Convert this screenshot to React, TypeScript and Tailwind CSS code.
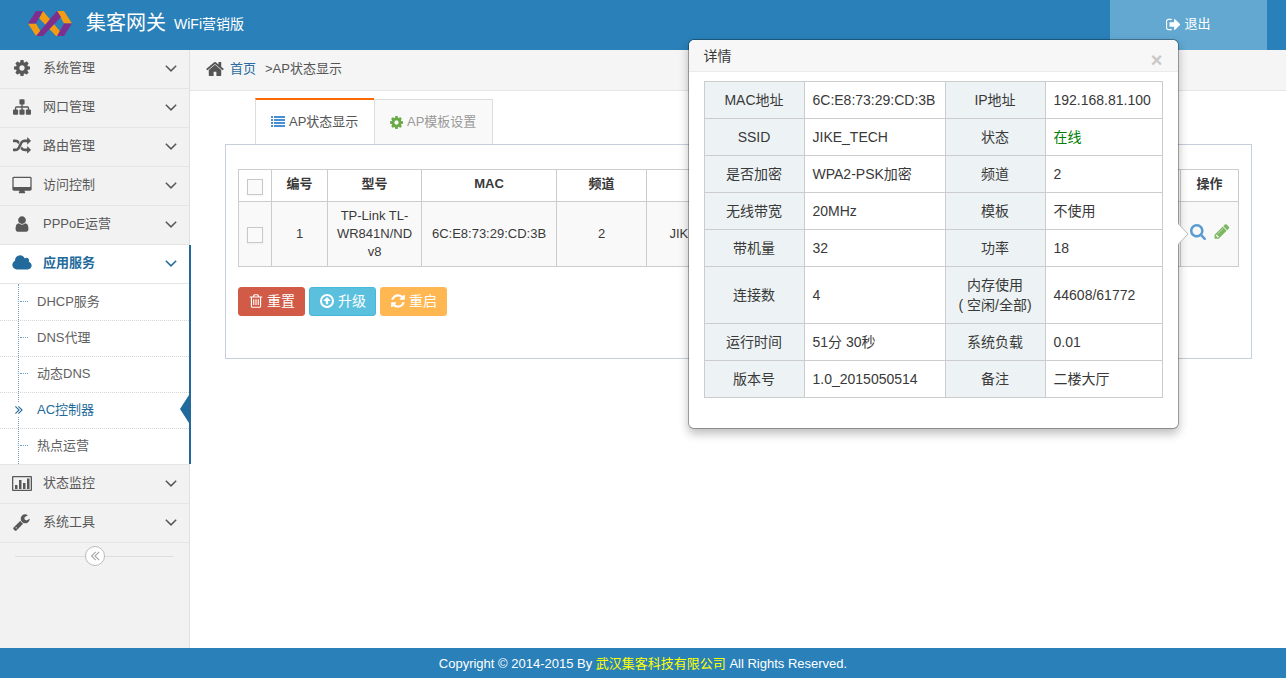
import { useState } from 'react';
import type { ReactNode } from 'react';
import clsx from 'clsx';

const icons = {
  cog: {
    box: '128 128 1536 1536',
    d: 'M1152 896q0-106-75-181t-181-75-181 75-75 181 75 181 181 75 181-75 75-181zm512-109v222q0 12-8 23t-20 13l-185 28q-19 54-39 91 35 50 107 138 10 12 10 25t-9 23q-27 37-99 108t-94 71q-12 0-26-9l-138-108q-44 23-91 38-16 136-29 186-7 28-36 28h-222q-14 0-24.5-8.5t-11.5-21.5l-28-184q-49-16-90-37l-141 107q-10 9-25 9-14 0-25-11-126-114-165-168-7-10-7-23 0-12 8-23 15-21 51-66.5t54-70.5q-27-50-41-99l-183-27q-13-2-21-12.5t-8-23.5v-222q0-12 8-23t19-13l186-28q14-46 39-92-40-57-107-138-10-12-10-24 0-10 9-23 26-36 98.5-107.5t94.5-71.5q13 0 26 10l138 107q44-23 91-38 16-136 29-186 7-28 36-28h222q14 0 24.5 8.5t11.5 21.5l28 184q49 16 90 37l142-107q9-9 24-9 13 0 25 10 129 119 165 170 7 8 7 22 0 12-8 23-15 21-51 66.5t-54 70.5q26 50 41 98l183 28q13 2 21 12.5t8 23.5z',
  },
  sitemap: {
    box: '0 0 1792 1792',
    d: 'M1792 1248v320q0 40-28 68t-68 28h-320q-40 0-68-28t-28-68v-320q0-40 28-68t68-28h96v-192h-512v192h96q40 0 68 28t28 68v320q0 40-28 68t-68 28h-320q-40 0-68-28t-28-68v-320q0-40 28-68t68-28h96v-192h-512v192h96q40 0 68 28t28 68v320q0 40-28 68t-68 28h-320q-40 0-68-28t-28-68v-320q0-40 28-68t68-28h96v-192q0-52 38-90t90-38h512v-192h-96q-40 0-68-28t-28-68v-320q0-40 28-68t68-28h320q40 0 68 28t28 68v320q0 40-28 68t-68 28h-96v192h512q52 0 90 38t38 90v192h96q40 0 68 28t28 68z',
  },
  random: {
    box: '0 0 1792 1792',
    d: 'M666 481q-60 92-137 273-22-45-37-72.5t-40.5-63.5-51-56.5-63-35-81.5-14.5h-224q-14 0-23-9t-9-23v-192q0-14 9-23t23-9h224q250 0 410 225zm1126 799q0 14-9 23l-320 320q-9 9-23 9-13 0-22.5-9.5t-9.5-22.5v-192q-32 0-85 .5t-81 1-73-1-71-5-64-10.5-63-18.5-58-28.5-59-40-55-53.5-56-69.5q59-93 136-273 22 45 37 72.5t40.5 63.5 51 56.5 63 35 81.5 14.5h256v-192q0-14 9-23t23-9q12 0 24 10l319 319q9 9 9 23zm0-896q0 14-9 23l-320 320q-9 9-23 9-13 0-22.5-9.5t-9.5-22.5v-192h-256q-48 0-87 15t-69 45-51 61.5-45 77.5q-32 62-78 171-29 66-49.5 111t-54 105-64 100-74 83-90 68.5-106.5 42-128 16.5h-224q-14 0-23-9t-9-23v-192q0-14 9-23t23-9h224q48 0 87-15t69-45 51-61.5 45-77.5q32-62 78-171 29-66 49.5-111t54-105 64-100 74-83 90-68.5 106.5-42 128-16.5h256v-192q0-14 9-23t23-9q12 0 24 10l319 319q9 9 9 23z',
  },
  desktop: {
    box: '-64 -64 1920 1792',
    d: 'M1728 992v-832q0-13-9.5-22.5t-22.5-9.5h-1600q-13 0-22.5 9.5t-9.5 22.5v832q0 13 9.5 22.5t22.5 9.5h1600q13 0 22.5-9.5t9.5-22.5zm128-832v1088q0 66-47 113t-113 47h-544q0 37 16 77.5t32 71 16 43.5q0 26-19 45t-45 19h-512q-26 0-45-19t-19-45q0-14 16-44t32-70 16-78h-544q-66 0-113-47t-47-113v-1088q0-66 47-113t113-47h1600q66 0 113 47t47 113z',
  },
  user: {
    box: '0 0 1792 1792',
    d: 'M1536 1399q0 109-62.5 187t-150.5 78h-854q-88 0-150.5-78t-62.5-187q0-85 8.5-160.5t31.5-152 58.5-131 94-89 134.5-34.5q131 128 313 128t313-128q76 0 134.5 34.5t94 89 58.5 131 31.5 152 8.5 160.5zm-256-887q0 159-112.5 271.5t-271.5 112.5-271.5-112.5-112.5-271.5 112.5-271.5 271.5-112.5 271.5 112.5 112.5 271.5z',
  },
  cloud: {
    box: '64 0 1920 1792',
    d: 'M1984 1152q0 159-112.5 271.5t-271.5 112.5h-1088q-185 0-316.5-131.5t-131.5-316.5q0-132 71-241.5t187-163.5q-2-28-2-43 0-212 150-362t362-150q158 0 286.5 88t187.5 230q70-62 166-62 106 0 181 75t75 181q0 75-41 138 129 30 213 134.5t84 239.5z',
  },
  chart: {
    box: '0 0 20 18',
    d: 'M1 2h18a1 1 0 0 1 1 1v13a1 1 0 0 1-1 1H1a1 1 0 0 1-1-1V3a1 1 0 0 1 1-1zm.3 1.3v12.4h17.4V3.300zM3 11h2.500v4H3zM7 6h2.500v9H7zM11 9h2.500v6H11zM15 4.500h2.500V15H15z',
  },
  wrench: {
    box: '64 0 1792 1792',
    d: 'M448 1472q0-26-19-45t-45-19-45 19-19 45 19 45 45 19 45-19 19-45zm644-420l-682 682q-37 37-90 37-52 0-91-37l-106-108q-38-36-38-90 0-53 38-91l681-681q39 98 114.5 173.5t173.5 114.5zm634-435q0 39-23 106-47 134-164.5 217.5t-258.5 83.5q-185 0-316.5-131.5t-131.5-316.5 131.5-316.5 316.5-131.5q58 0 121.5 16.5t107.5 46.5q16 11 16 28t-16 28l-293 169v224l193 107q5-3 79-48.5t135.5-81 70.5-35.5q15 0 23.500 10t8.500 25z',
  },
  angleDown: {
    box: '0 0 1792 1792',
    d: 'M1395 736q0 13-10 23l-466 466q-10 10-23 10t-23-10l-466-466q-10-10-10-23t10-23l50-50q10-10 23-10t23 10l393 393 393-393q10-10 23-10t23 10l50 50q10 10 10 23z',
  },
  angleDouble: {
    box: '0 64 1792 1792',
    d: 'M1011 1376q0 13-10 23l-50 50q-10 10-23 10t-23-10l-466-466q-10-10-10-23t10-23l466-466q10-10 23-10t23 10l50 50q10 10 10 23t-10 23l-393 393 393 393q10 10 10 23zm384 0q0 13-10 23l-50 50q-10 10-23 10t-23-10l-466-466q-10-10-10-23t10-23l466-466q10-10 23-10t23 10l50 50q10 10 10 23t-10 23l-393 393 393 393q10 10 10 23z',
  },
  home: {
    box: '64 64 1664 1664',
    d: 'M1472 992v480q0 26-19 45t-45 19h-384v-384h-256v384h-384q-26 0-45-19t-19-45v-480q0-1 .5-3t.5-3l575-474 575 474q1 2 1 6zm223-69l-62 74q-8 9-21 11h-3q-13 0-21-7l-692-577-692 577q-12 8-24 7-13-2-21-11l-62-74q-8-10-7-23.5t11-21.5l719-599q32-26 76-26t76 26l244 204v-195q0-14 9-23t23-9h192q14 0 23 9t9 23v408l219 182q10 8 11 21.5t-7 23.5z',
  },
  list: {
    box: '0 0 14 14',
    d: 'M0 1h2v2H0zM3 1h11v2H3zM0 4h2v2H0zM3 4h11v2H3zM0 7h2v2H0zM3 7h11v2H3zM0 10h2v2H0zM3 10h11v2H3z',
  },
  trash: {
    box: '0 0 1792 1792',
    d: 'M704 736v576q0 14-9 23t-23 9h-64q-14 0-23-9t-9-23v-576q0-14 9-23t23-9h64q14 0 23 9t9 23zm256 0v576q0 14-9 23t-23 9h-64q-14 0-23-9t-9-23v-576q0-14 9-23t23-9h64q14 0 23 9t9 23zm256 0v576q0 14-9 23t-23 9h-64q-14 0-23-9t-9-23v-576q0-14 9-23t23-9h64q14 0 23 9t9 23zm128 724v-948h-896v948q0 22 7 40.5t14.5 27 10.5 8.5h832q3 0 10.5-8.5t14.5-27 7-40.5zm-672-1076h448l-48-117q-7-9-17-11h-317q-10 2-17 11zm928 32v64q0 14-9 23t-23 9h-96v948q0 83-47 143.5t-113 60.5h-832q-66 0-113-58.5t-47-141.5v-952h-96q-14 0-23-9t-9-23v-64q0-14 9-23t23-9h309l70-167q15-37 54-63t79-26h320q40 0 79 26t54 63l70 167h309q14 0 23 9t9 23z',
  },
  up: {
    box: '-1 -1 16 16',
    d: 'M7 0a7 7 0 1 1 0 14A7 7 0 0 1 7 0zm0 2a5 5 0 1 0 0 10A5 5 0 0 0 7 2zm0 1l3.400 3.600a.3.3 0 0 1-.2.500H8.200v3.200H5.800V7.100h-2a.3.3 0 0 1-.2-.5z',
  },
  refresh: {
    box: '0 0 1792 1792',
    d: 'M1639 1056q0 5-1 7-64 268-268 434.5t-478 166.5q-146 0-282.5-55t-243.5-157l-129 129q-19 19-45 19t-45-19-19-45v-448q0-26 19-45t45-19h448q26 0 45 19t19 45-19 45l-137 137q71 66 161 102t187 36q134 0 250-65t186-179q11-17 53-117 8-23 30-23h192q13 0 22.5 9.5t9.5 22.5zm25-800v448q0 26-19 45t-45 19h-448q-26 0-45-19t-19-45 19-45l138-138q-148-137-349-137-134 0-250 65t-186 179q-11 17-53 117-8 23-30 23h-199q-13 0-22.5-9.5t-9.5-22.5v-7q65-268 270-434.5t480-166.5q146 0 284 55.5t245 156.5l130-129q19-19 45-19t45 19 19 45z',
  },
  signOut: {
    box: '64 64 1664 1664',
    d: 'M704 1440q0 4 1 20t.5 26.5-3 23.5-10 19.5-20.5 6.5h-320q-119 0-203.5-84.5t-84.5-203.5v-704q0-119 84.5-203.5t203.5-84.5h320q13 0 22.5 9.5t9.5 22.5q0 4 1 20t.5 26.5-3 23.5-10 19.5-20.5 6.5h-320q-66 0-113 47t-47 113v704q0 66 47 113t113 47h312l11.5 1 11.5 3 8 5.5 7 9 2 13.5zm928-544q0 26-19 45l-544 544q-19 19-45 19t-45-19-19-45v-288h-448q-26 0-45-19t-19-45v-384q0-26 19-45t45-19h448v-288q0-26 19-45t45-19 45 19l544 544q19 19 19 45z',
  },
  search: {
    box: '64 128 1664 1664',
    d: 'M1216 832q0-185-131.5-316.5t-316.5-131.5-316.5 131.5-131.5 316.5 131.5 316.5 316.5 131.5 316.5-131.5 131.5-316.5zm512 832q0 52-38 90t-90 38q-54 0-90-38l-343-342q-179 124-399 124-143 0-273.5-55.5t-225-150-150-225-55.5-273.5 55.5-273.5 150-225 225-150 273.5-55.5 273.5 55.5 225 150 150 225 55.5 273.5q0 220-124 399l343 343q37 37 37 90z',
  },
  pencil: {
    box: '64 128 1664 1664',
    d: 'M491 1536l91-91-235-235-91 91v107h128v128h107zm523-928q0-22-22-22-10 0-17 7l-542 542q-7 7-7 17 0 22 22 22 10 0 17-7l542-542q7-7 7-17zm-54-192l416 416-832 832h-416v-416zm683 96q0 53-37 90l-166 166-416-416 166-165q36-38 90-38 53 0 91 38l235 234q37 39 37 91z',
  },
};

type IconName = keyof typeof icons;

function Icon({ name, className }: { name: IconName; className: string }) {
  return (
    <svg viewBox={icons[name].box} className={clsx('shrink-0', className)} fill="currentColor" fillRule="evenodd" aria-hidden="true">
      <path d={icons[name].d} />
    </svg>
  );
}

function Logo() {
  return (
    <svg viewBox="0 0 44 25" className="h-[25px] w-[44px]" aria-hidden="true">
      <path fill="#f39c12" d="M15 0l-4 7 17 18h8L15 0zM0 12.500h8L15 25H8zM29 0h7l8 12.500h-8z" />
      <path fill="#7d2f8e" d="M8 0h7L8 12.500H0zM29 0l4 6L15 25H8l14-17zM36 12.500h8L36 25h-7z" />
    </svg>
  );
}

const menuTop: { icon: IconName; label: string }[] = [
  { icon: 'cog', label: '系统管理' },
  { icon: 'sitemap', label: '网口管理' },
  { icon: 'random', label: '路由管理' },
  { icon: 'desktop', label: '访问控制' },
  { icon: 'user', label: 'PPPoE运营' },
];

const menuBottom: { icon: IconName; label: string }[] = [
  { icon: 'chart', label: '状态监控' },
  { icon: 'wrench', label: '系统工具' },
];

const subMenu = ['DHCP服务', 'DNS代理', '动态DNS', 'AC控制器', '热点运营'];

const details: [ReactNode, string, ReactNode, string][] = [
  ['MAC地址', '6C:E8:73:29:CD:3B', 'IP地址', '192.168.81.100'],
  ['SSID', 'JIKE_TECH', '状态', '在线'],
  ['是否加密', 'WPA2-PSK加密', '频道', '2'],
  ['无线带宽', '20MHz', '模板', '不使用'],
  ['带机量', '32', '功率', '18'],
  ['连接数', '4', <>内存使用<br />( 空闲/全部)</>, '44608/61772'],
  ['运行时间', '51分 30秒', '系统负载', '0.01'],
  ['版本号', '1.0_2015050514', '备注', '二楼大厅'],
];

function MenuItem({ icon, label, active = false }: { icon: IconName; label: string; active?: boolean }) {
  return (
    <a
      href="#"
      className={clsx(
        'flex h-[39px] items-center border-b border-[#e5e5e5] pr-2 pb-[3px]',
        active ? 'bg-white font-bold text-[#226a9c]' : 'text-[#585858]',
      )}
    >
      <span className="flex w-[43px] justify-center">
        <Icon name={icon} className={icon === 'cog' ? 'size-4' : 'h-[18px] w-5'} />
      </span>
      <span className="flex-1">{label}</span>
      <Icon name="angleDown" className="size-5" />
    </a>
  );
}

function Sidebar() {
  const current = 'AC控制器';

  return (
    <nav className="w-[190px] shrink-0 border-r border-[#e0e0e0] bg-[#f2f2f2]">
      <ul>
        {menuTop.map((item) => (
          <li key={item.label}>
            <MenuItem {...item} />
          </li>
        ))}
        <li className="relative border-b border-[#e5e5e5] bg-white">
          <MenuItem icon="cloud" label="应用服务" active />
          <ul className="relative">
            <li className="absolute inset-y-0 left-[18px] border-l border-dotted border-[#6fa3cb]" aria-hidden="true" />
            {subMenu.map((label, index) => (
              <li
                key={label}
                className={clsx('relative border-t border-dotted', index === 0 ? 'border-transparent' : 'border-[#d5d5d5]')}
              >
                <a
                  href="#"
                  className={clsx('flex h-[35px] items-center pb-[2px]', label === current ? 'text-[#226a9c]' : 'text-[#616161]')}
                >
                  {label === current ? (
                    <span className="flex w-[37px] justify-center">
                      <Icon name="angleDouble" className="size-[14px] rotate-180 bg-white" />
                    </span>
                  ) : (
                    <span className="w-[37px] pr-[9px] pl-5">
                      <span className="block border-t border-dotted border-[#6fa3cb]" />
                    </span>
                  )}
                  <span>{label}</span>
                </a>
                {label === current && (
                  <svg viewBox="0 0 9 28" className="absolute top-[2px] right-0 h-7 w-[9px]" aria-hidden="true">
                    <path fill="#226a9c" d="M9 0v28L0 14z" />
                  </svg>
                )}
              </li>
            ))}
          </ul>
          <span className="absolute inset-y-0 -right-[2px] w-[2px] bg-[#226a9c]" />
        </li>
        {menuBottom.map((item) => (
          <li key={item.label}>
            <MenuItem {...item} />
          </li>
        ))}
      </ul>
      <div className="flex items-center px-[15px] pt-[3px]">
        <span className="h-px flex-1 bg-[#dedede]" />
        <button
          type="button"
          aria-label="收起菜单"
          className="flex size-5 items-center justify-center rounded-full border border-[#bbb] bg-white text-[#aaa]"
        >
          <Icon name="angleDouble" className="size-4" />
        </button>
        <span className="h-px flex-1 bg-[#dedede]" />
      </div>
    </nav>
  );
}

function DetailPopover({ onClose }: { onClose: () => void }) {
  return (
    <div
      role="dialog"
      aria-label="详情"
      className="absolute top-1/2 right-full z-10 mr-[11px] w-[491px] -translate-y-1/2 rounded-md border border-black/30 bg-white bg-clip-padding text-left text-sm leading-5 text-[#393939] shadow-[0_5px_10px_rgba(0,0,0,0.25)]"
    >
      <div className="flex h-8 items-center justify-between rounded-t-md border-b border-[#ebebeb] bg-[#f7f7f7] px-[15px]">
        <h3>详情</h3>
        <button type="button" aria-label="关闭" onClick={onClose} className="pt-2 text-xl font-bold text-[#c8c8c8]">
          ×
        </button>
      </div>
      <div className="px-[15px] pt-[9px] pb-[30px]">
        <table className="w-full table-fixed border-collapse">
          <colgroup>
            <col className="w-[100px]" />
            <col className="w-[141px]" />
            <col className="w-[100px]" />
            <col />
          </colgroup>
          <tbody>
            {details.map((row, index) => (
              <tr key={index}>
                {row.map((cell, col) =>
                  col % 2 === 0 ? (
                    <th key={col} scope="row" className="border border-[#ccc] bg-[#edf3f4] py-2 text-center font-normal">
                      {cell}
                    </th>
                  ) : (
                    <td key={col} className={clsx('border border-[#ccc] p-2', cell === '在线' && 'text-[green]')}>
                      {cell}
                    </td>
                  ),
                )}
              </tr>
            ))}
          </tbody>
        </table>
      </div>
      <svg viewBox="0 0 11 22" className="absolute top-1/2 left-full h-[22px] w-[11px] -translate-y-1/2" aria-hidden="true">
        <path fill="#fff" stroke="#bbb" d="M0 .5L10 11 0 21.500" />
      </svg>
    </div>
  );
}

function ApTable() {
  const [open, setOpen] = useState(true);
  const checkbox = 'block size-4 mx-auto appearance-none border border-[#c8c8c8] bg-[#fafafa] shadow-[0_1px_2px_rgba(0,0,0,0.05)]';
  const head = 'border border-[#ccc] px-2 pb-[3px]';
  const cell = 'border border-[#ccc] px-2';

  return (
    <table className="w-full table-fixed border-collapse text-center leading-[18px] text-[#393939]">
      <colgroup>
        <col className="w-[33px]" />
        <col className="w-[56px]" />
        <col className="w-[94px]" />
        <col className="w-[135px]" />
        <col className="w-[90px]" />
        <col className="w-[116px]" />
        <col />
        <col className="w-[58px]" />
      </colgroup>
      <thead>
        <tr className="h-8">
          <th className="border border-[#ccc] pt-[2px]">
            <input type="checkbox" aria-label="全选" className={checkbox} />
          </th>
          <th className={head}>编号</th>
          <th className={head}>型号</th>
          <th className={head}>MAC</th>
          <th className={head}>频道</th>
          <th className={head}>SSID</th>
          <th className={head} />
          <th className={head}>操作</th>
        </tr>
      </thead>
      <tbody>
        <tr className="h-[65px] bg-[#f9f9f9]">
          <td className="border border-[#ccc] pt-[2px]">
            <input type="checkbox" aria-label="选择 1" className={checkbox} />
          </td>
          <td className={cell}>1</td>
          <td className={cell}>TP-Link TL-WR841N/ND v8</td>
          <td className={cell}>6C:E8:73:29:CD:3B</td>
          <td className={cell}>2</td>
          <td className={cell}>JIKE_TECH</td>
          <td className={cell} />
          <td className="border border-[#ccc]">
            <div className="flex justify-center gap-2">
              <div className="relative flex pb-1">
                <button type="button" aria-label="查看" onClick={() => setOpen(!open)} className="text-[#5a9bd1]">
                  <Icon name="search" className="size-4" />
                </button>
                {open && <DetailPopover onClose={() => setOpen(false)} />}
              </div>
              <button type="button" aria-label="编辑" className="pb-1 text-[#7cb761]">
                <Icon name="pencil" className="size-4" />
              </button>
            </div>
          </td>
        </tr>
      </tbody>
    </table>
  );
}

function ActionButton({ icon, label, className }: { icon: IconName; label: string; className: string }) {
  return (
    <button
      type="button"
      className={clsx('flex h-[29px] w-[67px] items-center justify-center gap-[3px] rounded-[3px] border pb-px text-sm leading-5 text-white', className)}
    >
      <Icon name={icon} className="size-4" />
      {label}
    </button>
  );
}

export default function App() {
  return (
    <div className="flex min-h-screen flex-col bg-white font-['Liberation_Sans','Noto_Sans_CJK_SC',sans-serif] text-[13px] leading-5 text-[#393939]">
      <header className="flex h-[50px] items-center bg-[#2a80b9] pr-[19px] pl-7 text-white">
        <div className="pb-[3px]">
          <Logo />
        </div>
        <h1 className="flex items-center gap-2 pb-1 pl-[14px] text-xl">
          集客网关
          <small className="pt-[2px] text-sm">WiFi营销版</small>
        </h1>
        <a href="#" className="ml-auto flex h-full w-[157px] items-center justify-center gap-[3px] bg-[#62a8d1] pb-[2px]">
          <Icon name="signOut" className="size-[15px]" />
          退出
        </a>
      </header>

      <div className="flex flex-1">
        <Sidebar />
        <main className="min-w-0 flex-1">
          <div className="flex h-[41px] items-center border-b border-[#e5e5e5] bg-[#f5f5f5] pb-[3px] pl-4 text-[#555]">
            <Icon name="home" className="size-[18px]" />
            <a href="#" className="ml-[6px] text-[#2a6c9f]">
              首页
            </a>
            <span className="ml-[9px]">&gt;AP状态显示</span>
          </div>

          <div className="pt-[7px] pr-[34px] pl-[35px]">
            <ul className="flex items-end pl-[30px]">
              <li>
                <a
                  href="#"
                  className="flex h-[46px] w-[119px] items-center gap-1 border-t-2 border-l border-t-[#ff6a00] border-l-[#ddd] pl-[15px] text-[#555]"
                >
                  <Icon name="list" className="size-[14px] text-[#4a8fd6]" />
                  AP状态显示
                </a>
              </li>
              <li>
                <a
                  href="#"
                  className="flex h-[45px] w-[119px] items-center gap-1 border border-b-0 border-[#ddd] bg-[#f9f9f9] pl-[15px] text-[#999]"
                >
                  <Icon name="cog" className="size-[13px] text-[#69aa46]" />
                  AP模板设置
                </a>
              </li>
            </ul>
            <section className="border border-[#c5d0dc] px-3 pt-6 pb-[42px]">
              <ApTable />
              <div className="mt-5 flex gap-1">
                <ActionButton icon="trash" label="重置" className="border-[#d15b47] bg-[#d15b47]" />
                <ActionButton icon="up" label="升级" className="border-[#46b8da] bg-[#5bc0de]" />
                <ActionButton icon="refresh" label="重启" className="border-[#ffb752] bg-[#ffb752]" />
              </div>
            </section>
          </div>
        </main>
      </div>

      <footer className="bg-[#2a80b9] pt-[6px] pb-1 text-center text-white">
        Copyright © 2014-2015 By <span className="text-[#ff0]">武汉集客科技有限公司</span> All Rights Reserved.
      </footer>
    </div>
  );
}
